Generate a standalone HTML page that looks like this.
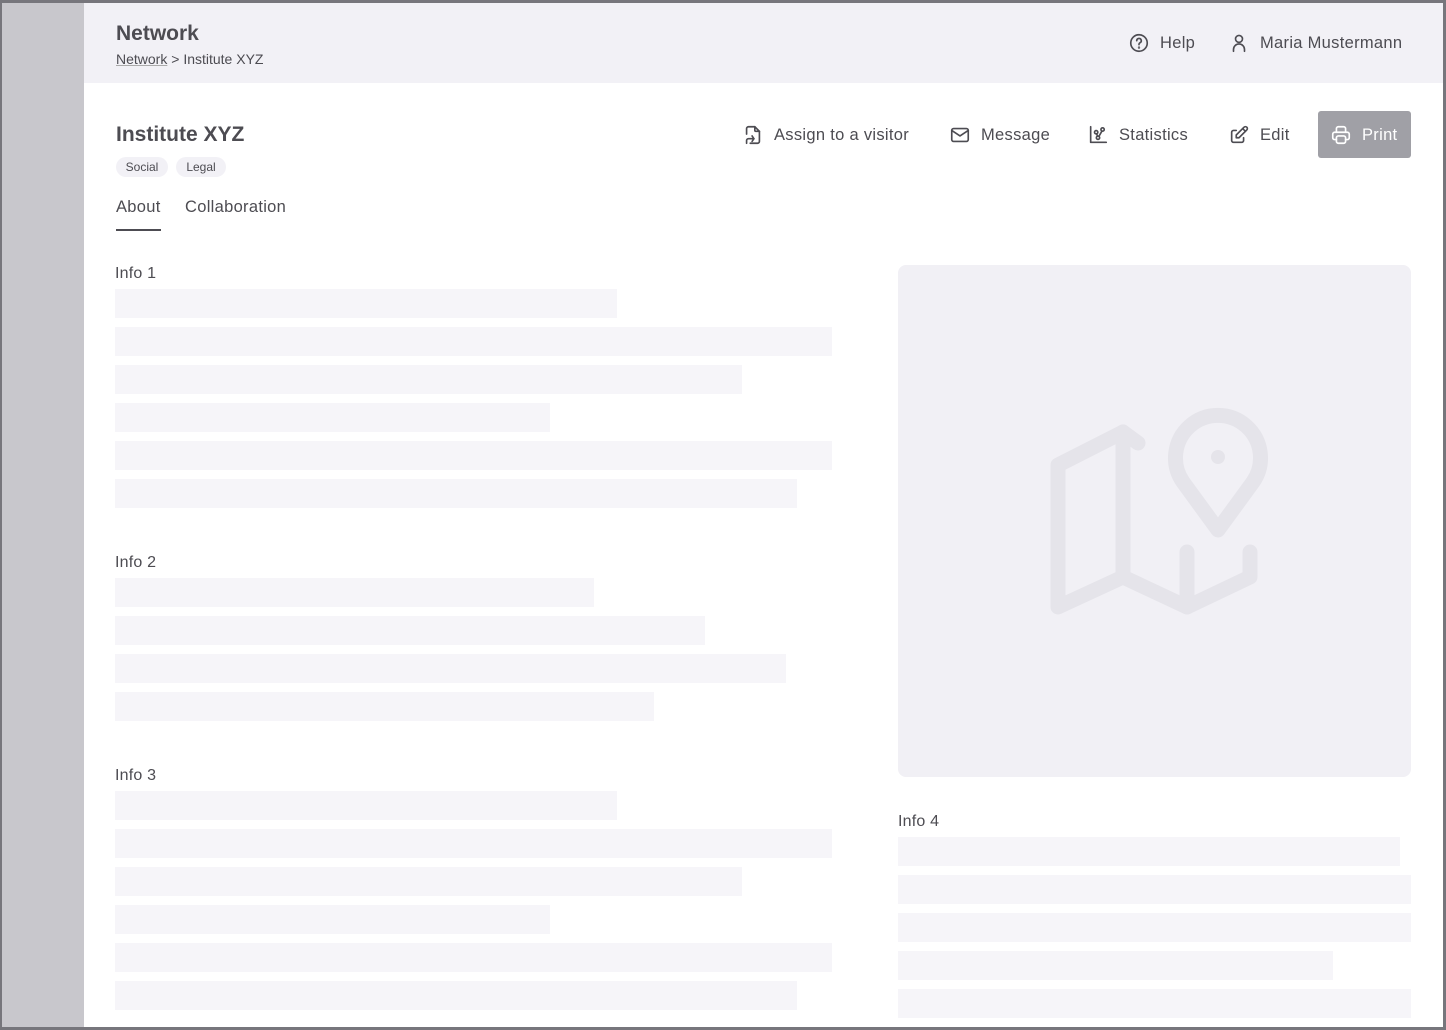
<!DOCTYPE html>
<html><head><meta charset="utf-8"><style>
*{margin:0;padding:0;box-sizing:border-box}
body{width:1446px;height:1030px;overflow:hidden;background:#77767c;font-family:"Liberation Sans",sans-serif;color:#4d4c52;position:relative}
.a{position:absolute}
.bar{position:absolute;height:29px;background:#f6f5f9;left:115px}
.lbl{position:absolute;font-size:16px;left:115px;color:#4d4c52;letter-spacing:.2px}
.act{position:absolute;top:124px;font-size:16.5px;display:flex;align-items:center;gap:10px;letter-spacing:.3px}
svg.i{width:22px;height:22px;fill:none;stroke:#4d4c52;stroke-width:1.8;stroke-linecap:round;stroke-linejoin:round}
</style></head><body>
<div class="a" style="left:2px;top:3px;width:1441px;height:1024px;background:#fff"></div>
<div class="a" style="left:2px;top:3px;width:82px;height:1024px;background:#c8c7cc"></div>
<div class="a" style="left:84px;top:3px;width:1359px;height:80px;background:#f2f1f6"></div>

<div class="a" style="left:116px;top:22px;font-size:21px;font-weight:bold">Network</div>
<div class="a" style="left:116px;top:51px;font-size:14px"><span style="text-decoration:underline;text-decoration-color:#aaa">Network</span> &gt; Institute XYZ</div>

<div class="act" style="left:1128px;top:32px">
<svg class="i" viewBox="0 0 24 24"><circle cx="12" cy="12" r="9"/><path d="M9.5 9.5a2.5 2.5 0 1 1 3.5 2.3c-.6.3-1 .9-1 1.6v.4"/><circle cx="12" cy="17" r=".4" fill="#4d4c52"/></svg>Help</div>
<div class="act" style="left:1228px;top:32px">
<svg class="i" viewBox="0 0 24 24"><circle cx="12" cy="7.5" r="3.8"/><path d="M6 21v-2a6 6 0 0 1 12 0v2"/></svg>Maria Mustermann</div>

<div class="a" style="left:116px;top:123px;font-size:21px;font-weight:bold">Institute XYZ</div>
<div class="a" style="left:116px;top:157px;width:52px;height:20px;border-radius:10px;background:#f2f1f6;font-size:12px;text-align:center;line-height:20px">Social</div>
<div class="a" style="left:176px;top:157px;width:50px;height:20px;border-radius:10px;background:#f2f1f6;font-size:12px;text-align:center;line-height:20px">Legal</div>
<div class="a" style="left:116px;top:198px;font-size:16.5px;letter-spacing:.3px">About</div>
<div class="a" style="left:185px;top:198px;font-size:16.5px;letter-spacing:.3px">Collaboration</div>
<div class="a" style="left:116px;top:229px;width:45px;height:2px;background:#4d4c52"></div>

<div class="act" style="left:742px">
<svg class="i" viewBox="0 0 24 24"><path d="M14 3v4a1 1 0 0 0 1 1h4"/><path d="M5 11V5a2 2 0 0 1 2-2h7l5 5v11a2 2 0 0 1-2 2H9"/><path d="M5 21v-3a2 2 0 0 1 2-2h6"/><path d="M11 13l2 3-2 3"/></svg>Assign to a visitor</div>
<div class="act" style="left:949px">
<svg class="i" viewBox="0 0 24 24"><rect x="3" y="5" width="18" height="14" rx="2"/><path d="M3 7l9 6 9-6"/></svg>Message</div>
<div class="act" style="left:1087px">
<svg class="i" viewBox="0 0 24 24"><path d="M4 3v17h17"/><circle cx="10" cy="9" r="1.8"/><circle cx="17" cy="6" r="1.8"/><circle cx="12" cy="15" r="1.8"/><path d="M10.5 10.7l1 2.6M13 13.5l3.3-5.8"/></svg>Statistics</div>
<div class="act" style="left:1228px">
<svg class="i" viewBox="0 0 24 24"><path d="M9 7H6a2 2 0 0 0-2 2v9a2 2 0 0 0 2 2h9a2 2 0 0 0 2-2v-3"/><path d="M9 15h3l8.5-8.5a2.1 2.1 0 0 0-3-3L9 12v3"/><path d="M16 5l3 3"/></svg>Edit</div>
<div class="a" style="left:1318px;top:111px;width:93px;height:47px;background:#a0a0a6;border-radius:3px"></div>
<div class="act" style="left:1330px;color:#fff">
<svg class="i" viewBox="0 0 24 24" style="stroke:#fff"><path d="M17 17h2a2 2 0 0 0 2-2v-4a2 2 0 0 0-2-2H5a2 2 0 0 0-2 2v4a2 2 0 0 0 2 2h2"/><path d="M17 9V5a2 2 0 0 0-2-2H9a2 2 0 0 0-2 2v4"/><rect x="7" y="13" width="10" height="8" rx="2"/></svg>Print</div>

<div class="lbl" style="top:265px">Info 1</div>
<div class="bar" style="top:289px;width:502px"></div>
<div class="bar" style="top:327px;width:717px"></div>
<div class="bar" style="top:365px;width:627px"></div>
<div class="bar" style="top:403px;width:435px"></div>
<div class="bar" style="top:441px;width:717px"></div>
<div class="bar" style="top:479px;width:682px"></div>

<div class="lbl" style="top:554px">Info 2</div>
<div class="bar" style="top:578px;width:479px"></div>
<div class="bar" style="top:616px;width:590px"></div>
<div class="bar" style="top:654px;width:671px"></div>
<div class="bar" style="top:692px;width:539px"></div>

<div class="lbl" style="top:767px">Info 3</div>
<div class="bar" style="top:791px;width:502px"></div>
<div class="bar" style="top:829px;width:717px"></div>
<div class="bar" style="top:867px;width:627px"></div>
<div class="bar" style="top:905px;width:435px"></div>
<div class="bar" style="top:943px;width:717px"></div>
<div class="bar" style="top:981px;width:682px"></div>

<div class="a" style="left:898px;top:265px;width:513px;height:512px;background:#f1f0f5;border-radius:8px"></div>
<svg class="a" style="left:0;top:0" width="1446" height="1030" fill="none" stroke="#e5e4ea" stroke-width="15" stroke-linecap="round" stroke-linejoin="round">
<path d="M1138 443L1123 432L1058 465V607L1123 577L1187 607L1250 577V552"/>
<path d="M1123 432V577M1187 552V607"/>
<path d="M1183 482A42.5 42.5 0 1 1 1253 482L1218 530Z"/>
<circle cx="1218" cy="457" r="7" fill="#e5e4ea" stroke="none"/>
</svg>

<div class="lbl" style="top:813px;left:898px">Info 4</div>
<div class="bar" style="top:837px;left:898px;width:502px"></div>
<div class="bar" style="top:875px;left:898px;width:513px"></div>
<div class="bar" style="top:913px;left:898px;width:513px"></div>
<div class="bar" style="top:951px;left:898px;width:435px"></div>
<div class="bar" style="top:989px;left:898px;width:513px;height:29px"></div>
</body></html>
